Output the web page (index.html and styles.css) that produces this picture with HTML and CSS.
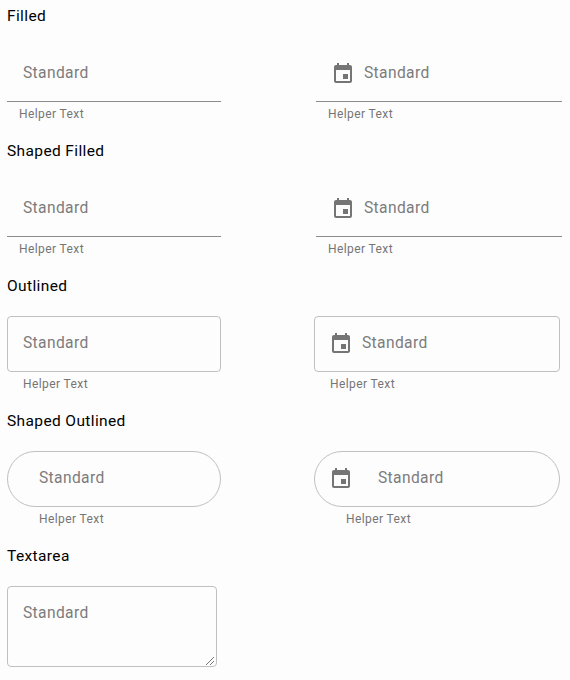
FILE: index.html
```html
<!DOCTYPE html>
<html lang="en">
<head>
<meta charset="utf-8">
<title>Text fields</title>
<link rel="stylesheet" href="styles.css">
</head>
<body>
<svg width="0" height="0" class="defs"><symbol id="event" viewBox="0 0 24 24"><path d="M17 12h-5v5h5v-5zM16 1v2H8V1H6v2H5c-1.11 0-1.99.9-1.99 2L3 19c0 1.1.89 2 2 2h14c1.1 0 2-.9 2-2V5c0-1.1-.9-2-2-2h-1V1h-2zm3 18H5V8h14v11z"/></symbol></svg>
<section class="filled">
  <h3>Filled</h3>
  <div class="row">
    <div class="cell"><div class="field"><span>Standard</span></div><p>Helper Text</p></div>
    <div class="cell wide"><div class="field"><svg><use href="#event"/></svg><span>Standard</span></div><p>Helper Text</p></div>
  </div>
</section>
<section class="filled">
  <h3>Shaped Filled</h3>
  <div class="row">
    <div class="cell"><div class="field"><span>Standard</span></div><p>Helper Text</p></div>
    <div class="cell wide"><div class="field"><svg><use href="#event"/></svg><span>Standard</span></div><p>Helper Text</p></div>
  </div>
</section>
<section class="outlined">
  <h3>Outlined</h3>
  <div class="row">
    <div class="cell"><div class="field"><span>Standard</span></div><p>Helper Text</p></div>
    <div class="cell wide"><div class="field"><svg><use href="#event"/></svg><span>Standard</span></div><p>Helper Text</p></div>
  </div>
</section>
<section class="outlined shaped">
  <h3>Shaped Outlined</h3>
  <div class="row">
    <div class="cell"><div class="field"><span>Standard</span></div><p>Helper Text</p></div>
    <div class="cell wide"><div class="field"><svg><use href="#event"/></svg><span>Standard</span></div><p>Helper Text</p></div>
  </div>
</section>
<section class="outlined">
  <h3>Textarea</h3>
  <div class="field area"><span>Standard</span><svg class="grip" viewBox="0 0 10 10"><path d="M1 9L9 1M5 9L9 5"/></svg></div>
</section>
</body>
</html>
```
FILE: styles.css
```css
* { box-sizing: border-box; }
body { margin: 0; padding: 6px 0 0 7px; background: #fdfdfd; font-family: Roboto, sans-serif; overflow: hidden; }
.defs { display: block; width: 0; height: 0; }
section { height: 135px; }
h3 { margin: 0 0 20px; font-size: 15.5px; line-height: 20px; font-weight: 400; letter-spacing: .38px; color: #000; }
.row { display: flex; gap: 93px; }
.cell { width: 214px; }
.wide { width: 246px; }
.filled .wide { margin-left: 2px; }
.field { display: flex; align-items: center; height: 56px; font-size: 15.6px; color: #7c7c7c; letter-spacing: .36px; }
.field svg { width: 24px; height: 24px; margin: 0 .6px 0 -.6px; fill: #757575; }
.field span { line-height: 20px; margin-top: -2px; }
.filled .field { padding-left: 16px; padding-top: 1px; border-bottom: 1px solid #8c8c8c; }
.field svg + span { margin-left: 8px; }
.outlined .field { border: 1px solid #c0c0c0; border-radius: 4px; padding-left: 15px; }
p { margin: 2px 0 0 12px; font-size: 12px; line-height: 20px; letter-spacing: .4px; color: #757575; }
.outlined p { margin-left: 16px; }
.shaped .field { border-radius: 28px; padding-left: 31px; }
.shaped .wide .field { padding-left: 15px; }
.shaped .field svg + span { margin-left: 24px; }
.shaped p { margin-left: 32px; }
.outlined .area { position: relative; width: 210px; height: 81px; align-items: flex-start; padding-top: 18px; }
.outlined .area .grip { position: absolute; right: 1px; bottom: 0; width: 10px; height: 10px; margin: 0; fill: none; stroke: #555; stroke-width: .8; }
```
